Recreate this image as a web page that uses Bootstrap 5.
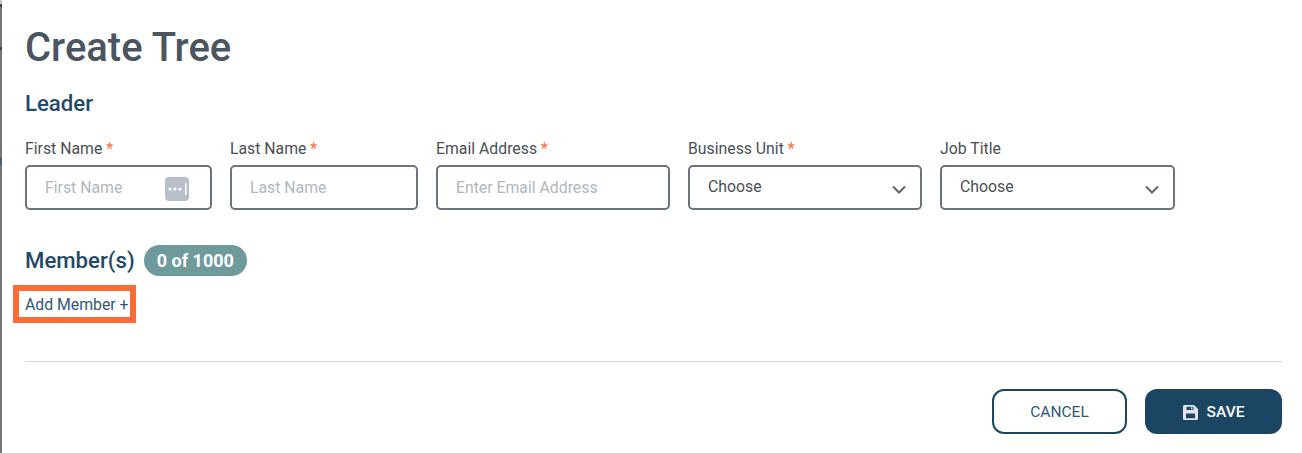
<!DOCTYPE html>
<html lang="en">
<head>
<meta charset="utf-8">
<title>Create Tree</title>
<link rel="stylesheet" href="https://cdn.jsdelivr.net/npm/bootstrap@5.3.0/dist/css/bootstrap.min.css">
<style>
html,body{height:100%;}
body{background:linear-gradient(to bottom,#c9c9c9 0 4px,#3f4347 4px 7px,#757575 7px 47px,#45484b 47px 50px,#757575 50px 158px,#3d5f7d 158px 165px,#757575 165px);font-family:Roboto,"Liberation Sans",sans-serif;overflow:hidden;}
.sheet{background:#fff;margin-left:2px;height:453px;padding:25px 20px 0 23px;}
.sheet-title{font-size:40px;font-weight:500;line-height:46px;color:#4b555f;margin:0 0 19px;}
.sec-title{font-size:22.2px;font-weight:500;line-height:26px;color:#1f4a68;margin:0;}
.fields{margin-top:23px;gap:18px;}
.fw-a{width:187px;}.fw-b{width:188px;}.fw-c{width:234px;}.fw-d{width:235px;}
.fld-label{font-size:15.8px;line-height:20px;color:#4a4f55;margin:0 0 6px;display:block;}
.req{color:#ff6b35;}
.fld-box{height:45px;border:2px solid #6b7280;border-radius:5px;background:#fff;position:relative;}
.fld-input{display:block;width:100%;height:100%;border:0;outline:0;background:transparent;padding:0 18px;font-size:15.8px;color:#4a4f55;border-radius:3px;}
.fld-input::placeholder{color:#b0b7c0;opacity:1;}
.fld-select{display:flex;align-items:center;height:100%;padding:0 18px 2px;font-size:15.8px;color:#4a4f55;}
.chev{position:absolute;right:14px;top:18px;}
.key-ico{position:absolute;left:138px;top:10px;}
.mem-head{margin-top:35px;gap:9px;}
.mem-head .sec-title{margin-bottom:2px;}
.mem-pill{background:#6f9a9c;color:#fff;font-size:18px;font-weight:700;line-height:31px;height:31px;padding:0 13px;border-radius:16px;}
.add-wrap{margin:9px 0 0 -12px;width:123px;height:38px;border:6px solid #ff6b35;padding:2px 0 0 6px;display:flex;align-items:center;}
.add-link{font-size:15.8px;color:#2f5878;text-decoration:none;white-space:nowrap;}
.sep{border:0;border-top:1px solid #d5d6d8;opacity:1;margin:38px 0 27px;}
.btn-cancel,.btn-save{height:45px;border-radius:12px;font-size:15.500px;display:flex;align-items:center;justify-content:center;padding-top:8px;}
.btn-cancel{width:135px;border:2px solid #1b4663;color:#2f5878;background:#fff;}
.btn-save{width:137px;border:0;background:#1b4663;color:#fff;font-weight:500;gap:9px;}
.acts{gap:18px;}
</style>
</head>
<body>
<div class="sheet">
  <h1 class="sheet-title">Create Tree</h1>
  <h2 class="sec-title">Leader</h2>
  <div class="d-flex fields">
    <div class="fw-a">
      <label class="fld-label">First Name <span class="req">*</span></label>
      <div class="fld-box"><input class="fld-input" placeholder="First Name">
        <svg class="key-ico" width="25" height="25" viewBox="0 0 25 25" aria-hidden="true"><rect width="24" height="24" rx="4" fill="#b8bfcb"/><circle cx="5" cy="12" r="1.600" fill="#fff"/><circle cx="10" cy="12" r="1.600" fill="#fff"/><circle cx="15" cy="12" r="1.600" fill="#fff"/><rect x="20" y="6" width="1.500" height="12" fill="#fff"/></svg>
      </div>
    </div>
    <div class="fw-b">
      <label class="fld-label">Last Name <span class="req">*</span></label>
      <div class="fld-box"><input class="fld-input" placeholder="Last Name"></div>
    </div>
    <div class="fw-c">
      <label class="fld-label">Email Address <span class="req">*</span></label>
      <div class="fld-box"><input class="fld-input" placeholder="Enter Email Address"></div>
    </div>
    <div class="fw-c">
      <label class="fld-label">Business Unit <span class="req">*</span></label>
      <div class="fld-box"><div class="fld-select">Choose</div>
        <svg class="chev" width="14" height="9" viewBox="0 0 14 9" aria-hidden="true"><path d="M1 1.500l6 6 6-6" fill="none" stroke="#5b6570" stroke-width="2"/></svg>
      </div>
    </div>
    <div class="fw-d">
      <label class="fld-label">Job Title</label>
      <div class="fld-box"><div class="fld-select">Choose</div>
        <svg class="chev" width="14" height="9" viewBox="0 0 14 9" aria-hidden="true"><path d="M1 1.500l6 6 6-6" fill="none" stroke="#5b6570" stroke-width="2"/></svg>
      </div>
    </div>
  </div>
  <div class="d-flex align-items-center mem-head">
    <h2 class="sec-title">Member(s)</h2>
    <span class="mem-pill">0 of 1000</span>
  </div>
  <div class="add-wrap"><a class="add-link" href="#">Add Member +</a></div>
  <hr class="sep">
  <div class="d-flex justify-content-end acts">
    <button type="button" class="btn btn-cancel">CANCEL</button>
    <button type="button" class="btn btn-save">
      <svg width="15" height="15" viewBox="0 0 15 15" aria-hidden="true"><path fill-rule="evenodd" fill="#dfe5ea" d="M1.500 0H11l4 4v9.500a1.500 1.500 0 0 1-1.500 1.500h-12A1.500 1.500 0 0 1 0 13.500V1.500A1.500 1.500 0 0 1 1.500 0zM3.500 1.700V5h7V1.700zM3 8.500v4.800h9V8.500zM8 2.300h1.500v2H8z"/></svg>
      SAVE
    </button>
  </div>
</div>
</body>
</html>
